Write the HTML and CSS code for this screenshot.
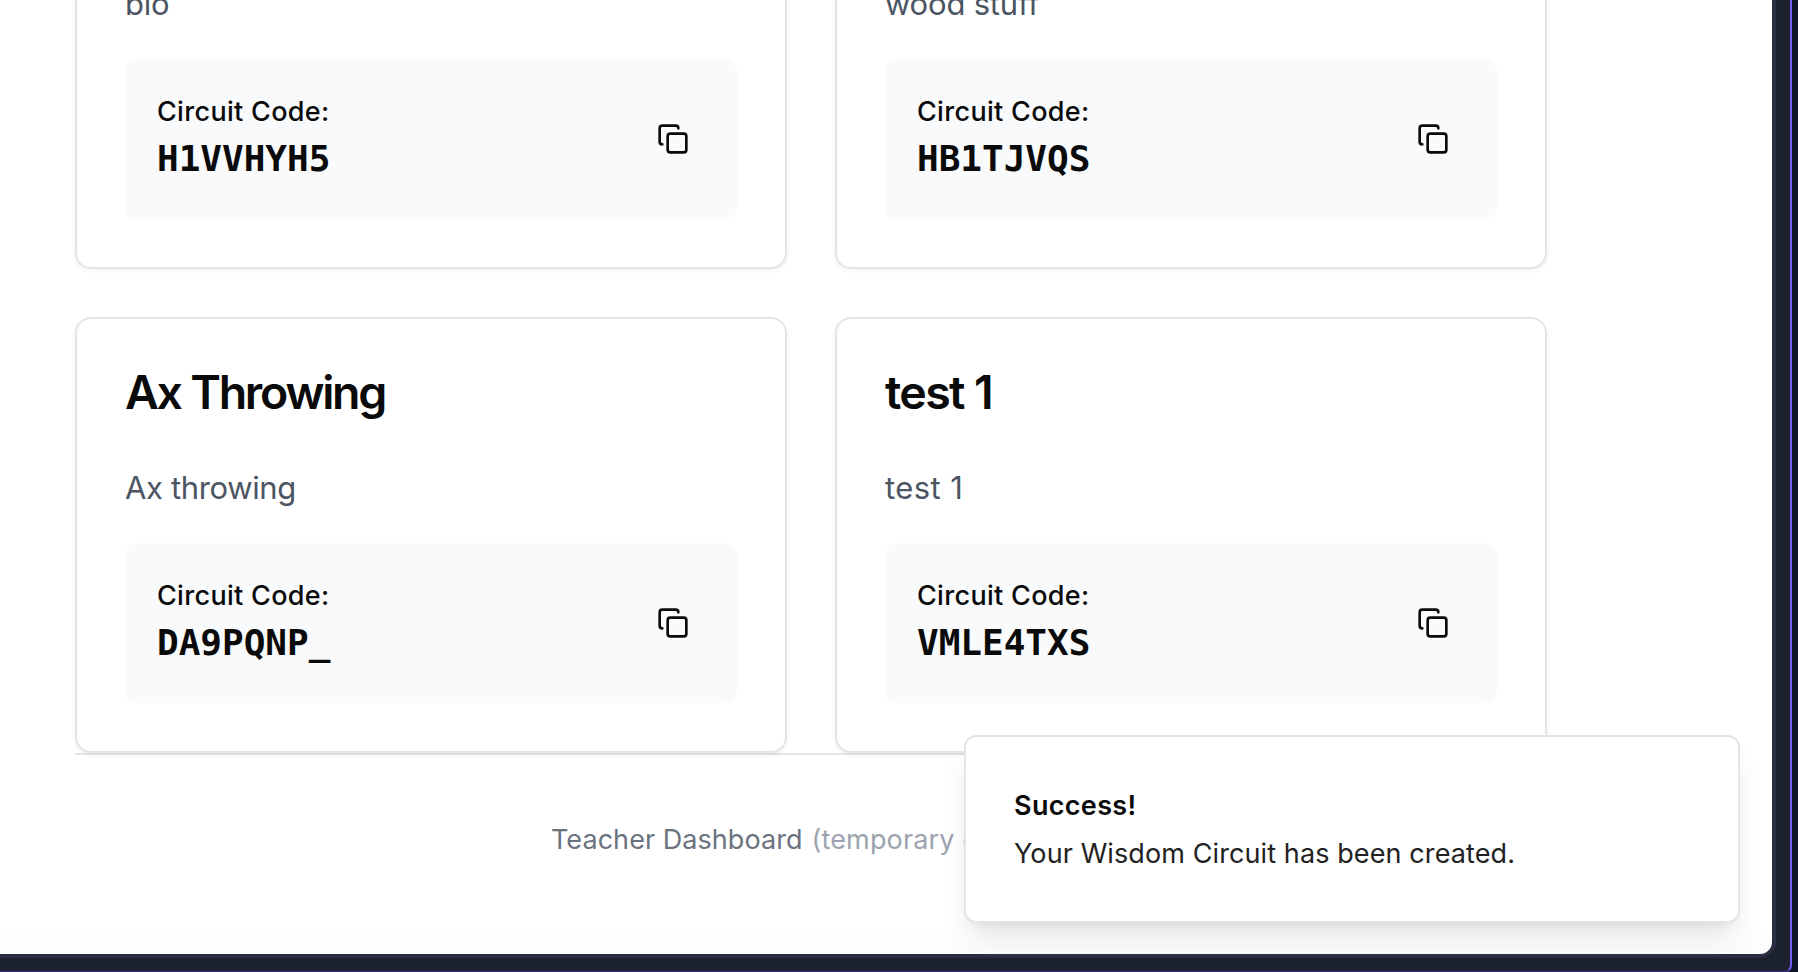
FILE: index.html
```html
<!DOCTYPE html>
<html lang="en">
<head>
<meta charset="utf-8">
<title>Wisdom Circuits</title>
<link rel="stylesheet" href="styles.css">
</head>
<body>
<svg class="sprite" aria-hidden="true">
  <symbol id="copy" viewBox="0 0 24 24">
    <rect x="8" y="8" width="14" height="14" rx="2" ry="2"/>
    <path d="M4 16c-1.1 0-2-.9-2-2V4c0-1.1.9-2 2-2h10c1.1 0 2 .9 2 2"/>
  </symbol>
</svg>
<div class="frame">
  <div class="viewport">
    <main class="container">
      <section class="grid">
        <article class="card">
          <h2 class="card-title">bio</h2>
          <p class="card-desc">bio</p>
          <div class="code-box">
            <div>
              <p class="code-label">Circuit Code:</p>
              <p class="code">H1VVHYH5</p>
            </div>
            <button class="copy-btn" aria-label="Copy"><svg class="icon"><use href="#copy"/></svg></button>
          </div>
        </article>
        <article class="card">
          <h2 class="card-title">wood stuff</h2>
          <p class="card-desc">wood stuff</p>
          <div class="code-box">
            <div>
              <p class="code-label">Circuit Code:</p>
              <p class="code">HB1TJVQS</p>
            </div>
            <button class="copy-btn" aria-label="Copy"><svg class="icon"><use href="#copy"/></svg></button>
          </div>
        </article>
        <article class="card card-tight">
          <h2 class="card-title">Ax Throwing</h2>
          <p class="card-desc">Ax throwing</p>
          <div class="code-box">
            <div>
              <p class="code-label">Circuit Code:</p>
              <p class="code">DA9PQNP_</p>
            </div>
            <button class="copy-btn" aria-label="Copy"><svg class="icon"><use href="#copy"/></svg></button>
          </div>
        </article>
        <article class="card card-loose">
          <h2 class="card-title">test 1</h2>
          <p class="card-desc">test 1</p>
          <div class="code-box">
            <div>
              <p class="code-label">Circuit Code:</p>
              <p class="code">VMLE4TXS</p>
            </div>
            <button class="copy-btn" aria-label="Copy"><svg class="icon"><use href="#copy"/></svg></button>
          </div>
        </article>
      </section>
      <footer class="footer">
        <span>Teacher Dashboard</span>
        <span class="footer-note">(temporary d</span>
      </footer>
    </main>
    <div class="toast" role="status">
      <p class="toast-title">Success!</p>
      <p class="toast-text">Your Wisdom Circuit has been created.</p>
    </div>
  </div>
</div>
</body>
</html>
```
FILE: styles.css
```css
* { box-sizing: border-box; margin: 0; padding: 0; }

body {
  width: 1798px;
  height: 972px;
  overflow: hidden;
  background: #0e1524;
  color: #0a0a0a;
  font-family: Inter, "Liberation Sans", sans-serif;
}

.sprite { display: none; }

.frame {
  width: 1792px;
  height: 973px;
  padding-right: 14px;
  background: #1c212e;
  border-right: 2px solid #755cf6;
  border-bottom: 2px solid #3b2f80;
  border-bottom-right-radius: 8px;
}

.viewport {
  position: relative;
  height: 958px;
  overflow: hidden;
  background: linear-gradient(#fff 925px, #fcfcfc 954px);
  border: solid #292f41;
  border-width: 0 4px 4px 0;
  border-bottom-right-radius: 16px;
}

.container { width: 1547px; padding-left: 75px; }

/* Scrolled so the first row is cut off by the top edge */
.grid {
  display: grid;
  grid-template-columns: 1fr 1fr;
  gap: 48px;
  margin-top: -167px;
}

.card {
  height: 436px;
  padding: 48px;
  background: #fff;
  border: 2px solid #e5e5e5;
  border-radius: 16px;
  box-shadow: 0 2px 4px rgba(0, 0, 0, .05);
}

.card-title {
  font-size: 46.5px;
  font-weight: 600;
  line-height: 50px;
  letter-spacing: -2px;
}

.card-desc {
  margin: 47px 0 31px;
  color: #4b5563;
  font-size: 31px;
  line-height: 48px;
  letter-spacing: -.2px;
}

.card-tight .card-title { letter-spacing: -2.26px; }
.card-tight .card-desc { letter-spacing: -.36px; }
.card-loose .card-title { letter-spacing: -1.65px; }
.card-loose .card-desc { letter-spacing: .4px; }

.code-box {
  display: flex;
  align-items: center;
  justify-content: space-between;
  height: 160px;
  padding: 32px;
  background: #f9fafb;
  border-radius: 12px;
}

.code-label {
  margin-bottom: -2px;
  font-size: 27px;
  font-weight: 500;
  line-height: 42px;
  letter-spacing: .32px;
}

.code {
  font: bold 36px/56px "DejaVu Sans Mono", monospace;
}

.copy-btn {
  display: flex;
  padding: 16px;
  background: none;
  border: 0;
}

.icon {
  width: 32px;
  height: 32px;
  fill: none;
  stroke: #0a0a0a;
  stroke-width: 2;
  stroke-linecap: round;
  stroke-linejoin: round;
}

.footer {
  display: flex;
  gap: 9px;
  padding: 65px 0 0 476px;
  border-top: 2px solid #e5e5e5;
  color: #6b7280;
  font-size: 27px;
  line-height: 40px;
  letter-spacing: .05px;
  white-space: nowrap;
}

.footer-note { color: #9ca3af; letter-spacing: .15px; }

.toast {
  position: absolute;
  right: 32px;
  bottom: 31px;
  width: 776px;
  height: 188px;
  padding: 49px 48px 47px;
  background: #fff;
  border: 2px solid #e5e5e5;
  border-radius: 12px;
  box-shadow: 0 20px 30px -6px rgba(0, 0, 0, .1), 0 8px 12px -8px rgba(0, 0, 0, .1);
}

.toast-title {
  margin-bottom: 8px;
  font-size: 27px;
  font-weight: 600;
  line-height: 40px;
  letter-spacing: .33px;
}

.toast-text {
  color: #222;
  font-size: 27px;
  line-height: 40px;
  letter-spacing: .1px;
}
```
